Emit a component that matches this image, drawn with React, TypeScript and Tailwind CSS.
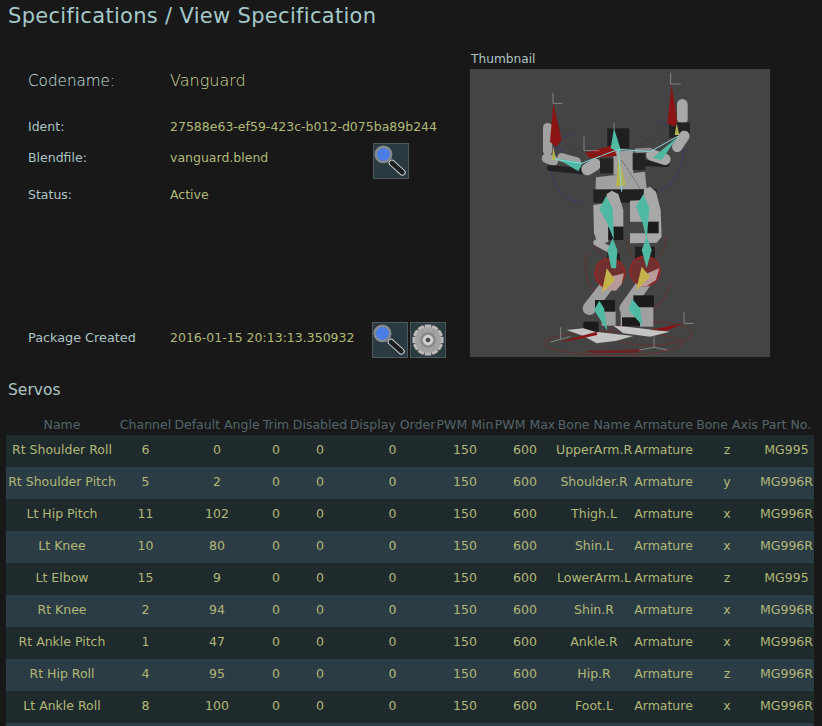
const servos = [
  ["Rt Shoulder Roll", "6", "0", "UpperArm.R", "z", "MG995"],
  ["Rt Shoulder Pitch", "5", "2", "Shoulder.R", "y", "MG996R"],
  ["Lt Hip Pitch", "11", "102", "Thigh.L", "x", "MG996R"],
  ["Lt Knee", "10", "80", "Shin.L", "x", "MG996R"],
  ["Lt Elbow", "15", "9", "LowerArm.L", "z", "MG995"],
  ["Rt Knee", "2", "94", "Shin.R", "x", "MG996R"],
  ["Rt Ankle Pitch", "1", "47", "Ankle.R", "x", "MG996R"],
  ["Rt Hip Roll", "4", "95", "Hip.R", "z", "MG996R"],
  ["Lt Ankle Roll", "8", "100", "Foot.L", "x", "MG996R"],
];

const headers = [
  { label: "Name", width: "w-[112px]" },
  { label: "Channel", width: "w-[55px]" },
  { label: "Default Angle", width: "w-[88px]" },
  { label: "Trim", width: "w-[30px]" },
  { label: "Disabled", width: "w-[58px]" },
  { label: "Display Order", width: "w-[87px]" },
  { label: "PWM Min", width: "w-[58px]" },
  { label: "PWM Max", width: "w-[62px]" },
  { label: "Bone Name", width: "w-[76px]" },
  { label: "Armature", width: "w-[63px]" },
  { label: "Bone Axis", width: "w-[64px]" },
  { label: "Part No.", width: "w-[55px]" },
];

function MagnifierIcon() {
  return (
    <svg viewBox="0 0 36 36" className="h-full w-full blur-[0.3px]">
      <line x1="19" y1="20" x2="30" y2="30" stroke="#d8d8d8" strokeWidth="7" strokeLinecap="round" />
      <line x1="19" y1="20" x2="30" y2="30" stroke="#1b1f22" strokeWidth="5" strokeLinecap="round" />
      <circle cx="10" cy="11" r="9.5" fill="#858a8e" />
      <circle cx="10" cy="11" r="6.8" fill="#4a7ee6" />
    </svg>
  );
}

function GearIcon() {
  const teeth = [0, 30, 60, 90, 120, 150, 180, 210, 240, 270, 300, 330];
  return (
    <svg viewBox="0 0 36 36" className="h-full w-full blur-[0.3px]">
      {teeth.map((a) => (
        <rect key={a} x="14.5" y="1.5" width="7" height="7" rx="1" fill="#b8b8b8" transform={`rotate(${a} 18 18)`} />
      ))}
      <circle cx="18" cy="18" r="13.5" fill="#a2a2a2" />
      <circle cx="18" cy="18" r="8.5" fill="#8a8a8a" />
      <circle cx="18" cy="18" r="5.5" fill="#d0d0d0" />
      <circle cx="18" cy="18" r="2.5" fill="#4a4a4a" />
    </svg>
  );
}

function IconButton({ children }: { children: React.ReactNode }) {
  return (
    <div className="h-[36px] w-[36px] shrink-0 border border-[#4c5a60] bg-[#2a3a40]">
      {children}
    </div>
  );
}

// zoomed-crop coordinates, 3x the thumbnail
function RobotThumbnail() {
  return (
    <svg viewBox="0 27 900 864" className="h-[288px] w-[300px] bg-[#444444] blur-[0.4px]">
      {/* floor and knee rings */}
      <g fill="none" stroke="#6f2c2c" strokeWidth="2.5">
        <ellipse cx="430" cy="850" rx="205" ry="36" />
        <ellipse cx="540" cy="820" rx="125" ry="36" />
        <path d="M350 580 Q335 650 375 700" />
        <path d="M370 545 Q385 590 420 600" />
        <path d="M590 530 Q585 590 545 610" />
        <path d="M600 670 Q590 720 550 745" />
        <path d="M470 535 Q480 590 500 600" />
      </g>
      {/* blue rings */}
      <g fill="none" stroke="#343a6b" strokeWidth="2.5">
        <path d="M315 218 Q235 240 245 340 Q260 420 340 428" />
        <path d="M560 185 Q640 190 640 290 Q625 370 560 400" />
        <path d="M225 250 Q290 260 285 300" />
      </g>
      {/* arms */}
      <g fill="none" strokeLinecap="round">
        <line x1="233" y1="203" x2="233" y2="272" stroke="#a0a0a0" strokeWidth="28" />
        <line x1="230" y1="295" x2="250" y2="302" stroke="#a0a0a0" strokeWidth="30" />
        <line x1="240" y1="324" x2="335" y2="334" stroke="#222222" strokeWidth="18" />
        <line x1="275" y1="292" x2="320" y2="305" stroke="#a0a0a0" strokeWidth="26" />
        <line x1="352" y1="328" x2="375" y2="314" stroke="#a8a8a8" strokeWidth="36" />
        <line x1="637" y1="133" x2="637" y2="178" stroke="#a8a8a8" strokeWidth="32" />
        <line x1="597" y1="210" x2="660" y2="210" stroke="#222222" strokeWidth="46" strokeLinecap="butt" />
        <line x1="643" y1="228" x2="622" y2="260" stroke="#a8a8a8" strokeWidth="32" />
        <line x1="530" y1="310" x2="590" y2="312" stroke="#222222" strokeWidth="18" />
        <line x1="545" y1="285" x2="585" y2="298" stroke="#a8a8a8" strokeWidth="34" />
        <line x1="500" y1="272" x2="540" y2="270" stroke="#8a8a8a" strokeWidth="14" />
      </g>
      {/* torso */}
      <rect x="412" y="205" width="66" height="60" fill="#1f1f1f" />
      <rect x="430" y="272" width="60" height="72" fill="#a0a0a0" />
      <rect x="390" y="295" width="40" height="45" fill="#232323" />
      <rect x="488" y="280" width="38" height="50" fill="#232323" />
      <polygon points="378,352 525,335 530,388 376,395" fill="#a0a0a0" />
      <rect x="370" y="388" width="190" height="40" fill="#202020" />
      {/* thighs */}
      <polygon points="370,435 408,430 410,402 425,392 445,402 460,450 460,500 415,500 415,545 385,555 372,520" fill="#a8a8a8" />
      <polygon points="480,422 520,420 522,388 540,380 558,395 572,450 575,530 560,548 480,550 480,520 530,520 530,485 480,485" fill="#a8a8a8" />
      <rect x="415" y="500" width="45" height="40" fill="#1b1b1b" />
      <rect x="530" y="485" width="36" height="35" fill="#1b1b1b" />
      <line x1="380" y1="548" x2="412" y2="565" stroke="#a8a8a8" strokeWidth="20" strokeLinecap="round" />
      <rect x="412" y="580" width="38" height="36" fill="#1f1f1f" />
      <rect x="495" y="560" width="60" height="40" fill="#1f1f1f" />
      {/* shins */}
      <g fill="none" strokeLinecap="round">
        <line x1="412" y1="675" x2="358" y2="745" stroke="#a0a0a0" strokeWidth="40" />
        <line x1="520" y1="672" x2="468" y2="745" stroke="#a0a0a0" strokeWidth="40" />
      </g>
      <rect x="375" y="720" width="60" height="36" fill="#1b1b1b" />
      <rect x="490" y="706" width="62" height="36" fill="#1b1b1b" />
      <rect x="395" y="755" width="42" height="42" fill="#a0a0a0" />
      <rect x="452" y="742" width="98" height="58" fill="#a0a0a0" />
      <rect x="340" y="785" width="46" height="36" fill="#1b1b1b" />
      <rect x="456" y="772" width="54" height="28" fill="#1b1b1b" />
      {/* feet */}
      <polygon points="290,810 340,805 375,815 490,828 440,842 380,850 340,828" fill="#c4c4c4" />
      <polygon points="430,797 470,800 600,815 540,830 460,820" fill="#c4c4c4" />
      {/* knees */}
      <circle cx="420" cy="640" r="45" fill="#70302f" />
      <circle cx="525" cy="633" r="45" fill="#70302f" />
      <circle cx="420" cy="640" r="44" fill="none" stroke="#a82020" strokeWidth="6" strokeDasharray="5 3" />
      <circle cx="525" cy="633" r="44" fill="none" stroke="#a82020" strokeWidth="6" strokeDasharray="5 3" />
      <polygon points="408,690 420,650 462,640 455,672 438,692" fill="#b99a9a" />
      <polygon points="505,680 520,645 568,625 558,660 530,678" fill="#b99a9a" />
      <polygon points="410,625 436,660 395,700" fill="#c4b34a" />
      <polygon points="515,620 540,650 498,692" fill="#c4b34a" />
      {/* red cones */}
      <polygon points="250,130 240,245 258,262 275,240" fill="#8b1414" />
      <polygon points="605,75 592,190 612,200 622,185" fill="#8b1414" />
      <polygon points="345,278 430,255 440,288 360,295" fill="#8b1414" />
      <polygon points="270,845 380,815 382,825 300,842" fill="#8b1414" />
      <polygon points="540,810 640,790 590,812" fill="#8b1414" />
      <polygon points="345,872 520,868 500,878 370,880" fill="#6c2222" />
      {/* bones */}
      <g fill="#4fb9a3">
        <polygon points="432,205 422,265 455,278" />
        <polygon points="262,296 338,308 325,334" />
        <polygon points="548,293 622,232 575,300" />
        <polygon points="408,408 388,448 412,490 432,540 428,445" />
        <polygon points="520,402 498,440 518,490 530,540 538,445" />
        <polygon points="428,535 412,570 424,625 438,625 442,570" />
        <polygon points="530,530 515,570 530,625 545,570" />
        <polygon points="388,722 372,750 412,812 402,745" />
        <polygon points="486,716 476,750 518,798 510,745" />
      </g>
      <polygon points="445,290 438,380 468,375" fill="#b5b254" />
      <polygon points="250,260 245,300 258,300" fill="#b5b254" />
      <polygon points="620,190 614,225 628,225" fill="#b5b254" />
      <g stroke="#86d6d6" strokeWidth="3" fill="none">
        <path d="M255 298 L335 310 L445 268 L540 275 L625 228" />
        <path d="M445 268 L455 395" />
      </g>
      <path d="M285 255 L400 290 M495 260 L590 205 M455 300 L510 385" stroke="#333333" strokeWidth="2" strokeDasharray="4 3" fill="none" />
      {/* axis gizmos */}
      <g stroke="#a8a8a8" strokeWidth="2.5" fill="none" opacity="0.75">
        <path d="M249 98 V130 M249 130 H278" />
        <path d="M602 38 V72 M602 72 H632" />
        <path d="M342 230 V272 H388" />
        <path d="M432 188 V210" />
        <path d="M272 802 V838 L242 846 M272 838 L300 830" />
        <path d="M642 755 V790 H672" />
        <path d="M552 825 V862 L508 870 M552 862 L592 870" />
      </g>
    </svg>
  );
}

export default function App() {
  return (
    <div className="h-[726px] w-[822px] overflow-hidden bg-[#181818] font-['DejaVu_Sans',sans-serif] text-[12.5px] text-[#aec4c4]">
      <h1 className="h-[34px] pl-[8px] pt-[2px] text-[21px] leading-[28px] tracking-[0.31px] font-normal text-[#a5c8ca]">
        Specifications / View Specification
      </h1>
      <div className="flex h-[323px]">
        <div className="w-[470px] pl-[28px]">
          <div className="mt-[34px] flex h-[26px] items-center font-light">
            <span className="w-[142px] text-[15.2px] text-[#d0e4e4]">Codename:</span>
            <span className="text-[16px] text-[#d0d898]">Vanguard</span>
          </div>
          <div className="mt-[23px] flex h-[20px] items-center">
            <span className="w-[142px]">Ident:</span>
            <span className="text-[#b0b878]">27588e63-ef59-423c-b012-d075ba89b244</span>
          </div>
          <div className="mt-[6px] flex h-[36px] items-center">
            <span className="w-[142px] pb-[6px]">Blendfile:</span>
            <span className="w-[203px] pb-[6px] text-[#b0b878]">vanguard.blend</span>
            <IconButton>
              <MagnifierIcon />
            </IconButton>
          </div>
          <div className="mt-[6px] flex h-[20px] items-center">
            <span className="w-[142px]">Status:</span>
            <span className="text-[#b0b878]">Active</span>
          </div>
          <div className="mt-[117px] flex h-[36px] items-center">
            <span className="w-[142px] pb-[4px] text-[12.8px]">Package Created</span>
            <span className="w-[202px] pb-[4px] text-[#b0b878]">2016-01-15 20:13:13.350932</span>
            <IconButton>
              <MagnifierIcon />
            </IconButton>
            <div className="ml-[2px]">
              <IconButton>
                <GearIcon />
              </IconButton>
            </div>
          </div>
        </div>
        <div>
          <div className="h-[35px] pl-[1px] pt-[15px] text-[12.2px] leading-[20px]">Thumbnail</div>
          <RobotThumbnail />
        </div>
      </div>
      <h2 className="h-[20px] pl-[8px] pt-[23px] text-[15.5px] leading-[20px] font-normal">
        Servos
      </h2>
      <table className="ml-[6px] mt-[34px] w-[808px] table-fixed text-center">
        <thead>
          <tr className="h-[20px] text-[#55656a]">
            {headers.map((h) => (
              <th key={h.label} className={`${h.width} whitespace-nowrap p-0 pt-[2px] font-normal`}>
                {h.label}
              </th>
            ))}
          </tr>
        </thead>
        <tbody className="text-[#b0b878]">
          {servos.map((s, i) => (
            <tr key={s[0]} className={i % 2 === 0 ? "h-[32px] bg-[#1f2a2d]" : "h-[32px] bg-[#2c3c44]"}>
              <td className="whitespace-nowrap p-0">{s[0]}</td>
              <td className="p-0">{s[1]}</td>
              <td className="p-0">{s[2]}</td>
              <td className="p-0">0</td>
              <td className="p-0">0</td>
              <td className="p-0">0</td>
              <td className="p-0">150</td>
              <td className="p-0">600</td>
              <td className="whitespace-nowrap p-0">{s[3]}</td>
              <td className="p-0">Armature</td>
              <td className="p-0">{s[4]}</td>
              <td className="p-0">{s[5]}</td>
            </tr>
          ))}
          <tr className="h-[32px] bg-[#2c3c44]">
            <td colSpan={12}></td>
          </tr>
        </tbody>
      </table>
    </div>
  );
}
